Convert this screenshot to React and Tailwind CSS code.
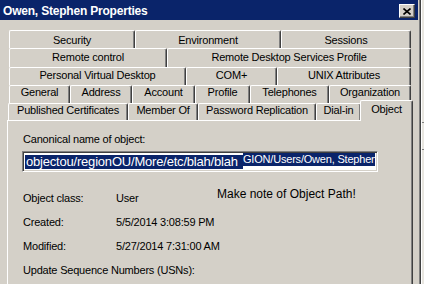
import { useState } from "react";

// --- 탭 데이터 (행 단위, 위에서 아래로) ---
const tabRows = [
  {
    row: "h-[18px] ml-[9px]",
    pad: "pt-[3px]",
    tabs: [
      ["Security", "w-[126px]"],
      ["Environment", "w-[146px]"],
      ["Sessions", "w-[130px]"],
    ],
  },
  {
    row: "h-[19px] ml-[9px]",
    pad: "pt-[2px]",
    tabs: [
      ["Remote control", "w-[158px]"],
      ["Remote Desktop Services Profile", "w-[244px]"],
    ],
  },
  {
    row: "h-[18px] ml-[9px]",
    pad: "pt-[1px]",
    tabs: [
      ["Personal Virtual Desktop", "w-[177px]"],
      ["COM+", "w-[91px]"],
      ["UNIX Attributes", "w-[134px]"],
    ],
  },
  {
    row: "h-[18px] ml-[9px]",
    pad: "pt-0",
    tabs: [
      ["General", "w-[61px]"],
      ["Address", "w-[62px]"],
      ["Account", "w-[63px]"],
      ["Profile", "w-[55px]"],
      ["Telephones", "w-[79px]"],
      ["Organization", "w-[82px]"],
    ],
  },
];

const lastRow = [
  ["Published Certificates", "w-[120px]"],
  ["Member Of", "w-[70px]"],
  ["Password Replication", "w-[118px]"],
  ["Dial-in", "w-[45px]"],
];

function Tab({ label, w, pad }) {
  return (
    <div
      className={`${w} ${pad} h-full shrink-0 flex justify-center whitespace-nowrap bg-[#d4d0c8] border-t border-l border-r border-t-white border-l-white border-r-[#404040] rounded-t-[2px] shadow-[inset_-1px_0_0_#808080]`}
    >
      {label}
    </div>
  );
}

function InfoRow({ label, value, children }) {
  return (
    <div className="flex items-start h-[13px] whitespace-nowrap">
      <span className="w-[93px] shrink-0">{label}</span>
      <span className="w-[101px] shrink-0">{value}</span>
      {children}
    </div>
  );
}

export default function App() {
  const [tab] = useState("Object");

  return (
    <div className="w-[424px] h-[284px] overflow-hidden flex bg-[#d4d0c8] text-black text-[11px] leading-[13px] tracking-[-0.2px] font-['Liberation_Sans',Arial,sans-serif]">
      {/* 속성 창 */}
      <div className="w-[421px] h-full shrink-0 flex flex-col border-r border-[#404040] shadow-[inset_-1px_0_0_#808080]">
        {/* 제목 표시줄 */}
        <div className="h-[20px] mr-[2px] shrink-0 flex items-start justify-between bg-[#0a246a] pl-[3px] pr-[3px]">
          <span className="pt-[5px] text-white font-bold text-[12px] tracking-[-0.2px]">
            Owen, Stephen Properties
          </span>
          <button className="mt-[4px] w-[16px] h-[14px] flex items-center justify-center bg-[#d4d0c8] border border-t-white border-l-white border-r-[#404040] border-b-[#404040] shadow-[inset_-1px_-1px_0_#808080]">
            <svg width="8" height="7" viewBox="0 0 8 7">
              <path d="M0.5 0.5 L7.5 6.5 M7.5 0.5 L0.5 6.5" stroke="#000" strokeWidth="1.6" />
            </svg>
          </button>
        </div>

        {/* 탭 행 */}
        <div className="mt-[10px] flex flex-col">
          {tabRows.map((r, i) => (
            <div key={i} className={`${r.row} flex`}>
              {r.tabs.map(([label, w]) => (
                <Tab key={label} label={label} w={w} pad={r.pad} />
              ))}
            </div>
          ))}
          <div className="h-[17px] ml-[8px] flex items-end">
            {lastRow.map(([label, w]) => (
              <Tab key={label} label={label} w={w} pad="pt-0" />
            ))}
            {/* 선택된 탭 */}
            <div className="w-[53px] h-[21px] -ml-px -mb-px relative z-10 shrink-0 flex justify-center pt-[2px] bg-[#d4d0c8] border-t border-l border-r border-t-white border-l-white border-r-[#404040] rounded-t-[2px] shadow-[inset_-1px_0_0_#808080]">
              {tab}
            </div>
          </div>
        </div>

        {/* 내용 패널 */}
        <div className="ml-[7px] w-[406px] flex-1 flex flex-col pl-[15px] pt-[12px] border-t border-l border-r border-t-white border-l-white border-r-[#404040] shadow-[inset_-1px_0_0_#808080]">
          <span>Canonical name of object:</span>

          {/* 정규 이름 텍스트 상자 */}
          <div className="mt-[5px] -ml-px w-[356px] h-[21px] flex items-start bg-white border border-t-[#808080] border-l-[#808080] border-r-white border-b-white shadow-[inset_1px_1px_0_#404040,inset_-1px_-1px_0_#d4d0c8] pl-[2px] pt-[1px] whitespace-nowrap text-white">
            <div className="mt-[2px] w-[218px] h-[14px] shrink-0 bg-[#0a246a] text-[13px] leading-[14px] pl-[1px]">
              objectou/regionOU/More/etc/blah/blah
            </div>
            <div className="w-[132px] h-[13px] overflow-hidden flex justify-end bg-[#0a246a]">
              <span className="-mr-[2px]">GION/Users/Owen, Stephen</span>
            </div>
          </div>

          {/* 속성 정보 */}
          <div className="mt-[20px] flex flex-col gap-[11px]">
            <InfoRow label="Object class:" value="User">
              <span className="-mt-[4px] text-[12px] tracking-normal">
                Make note of Object Path!
              </span>
            </InfoRow>
            <InfoRow label="Created:" value="5/5/2014 3:08:59 PM" />
            <InfoRow label="Modified:" value="5/27/2014 7:31:00 AM" />
            <span className="whitespace-nowrap">Update Sequence Numbers (USNs):</span>
          </div>
        </div>
      </div>

      {/* 뒤쪽 창 가장자리 */}
      <div className="flex-1 flex flex-col bg-[#e8e6e0] border-l border-white">
        <div className="h-[122px]" />
        <div className="h-[28px] border-t border-b border-[#808080]" />
      </div>
    </div>
  );
}
